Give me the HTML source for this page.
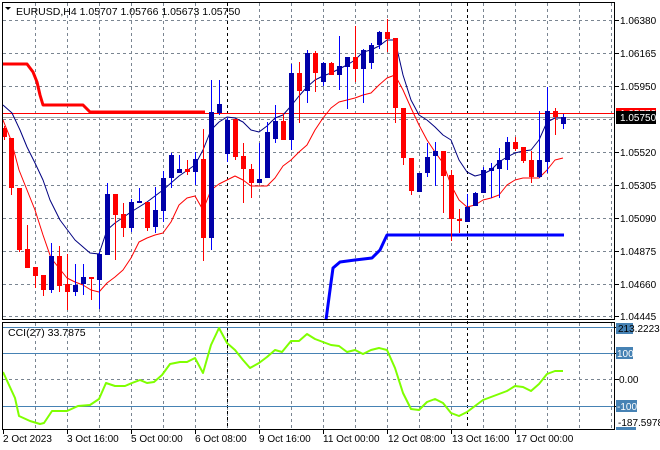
<!DOCTYPE html>
<html><head><meta charset="utf-8"><style>
html,body{margin:0;padding:0;background:#fff;}
svg{display:block;font-family:"Liberation Sans",sans-serif;}
</style></head><body>
<svg id="s" width="660" height="450" viewBox="0 0 660 450" xmlns="http://www.w3.org/2000/svg">
<rect width="660" height="450" fill="#fff"/>
<g id="grid" stroke="#7a8591" stroke-width="1" stroke-dasharray="3,3"></g>
<line x1="227.5" y1="3" x2="227.5" y2="429" stroke="#000" stroke-dasharray="3,3"/>
<line x1="467.5" y1="3" x2="467.5" y2="429" stroke="#000" stroke-dasharray="3,3"/>
<line x1="3" y1="327.5" x2="615" y2="327.5" stroke="#4682b4"/>
<line x1="3" y1="353.5" x2="615" y2="353.5" stroke="#4682b4"/>
<line x1="3" y1="406.5" x2="615" y2="406.5" stroke="#4682b4"/>
<line x1="3" y1="113.5" x2="615" y2="113.5" stroke="#ff0000"/>
<line x1="3" y1="117.5" x2="615" y2="117.5" stroke="#a0a0a0"/>
<g id="ind"></g>
<g id="candles"></g>
<rect x="2.5" y="2.5" width="612" height="317" fill="none" stroke="#000"/>
<rect x="2.5" y="322.5" width="612" height="107" fill="none" stroke="#000"/>
<g id="ticks" stroke="#000"></g>
<path d="M5 7 L11 7 L8 10 Z" fill="#000"/>
<text x="16" y="15" font-size="10.5" fill="#000">EURUSD,H4  1.05707 1.05766 1.05673 1.05750</text>
<text x="8" y="336" font-size="10.5" fill="#000">CCI(27) 33.7875</text>
<g font-size="10" fill="#000">
<text x="620" y="24">1.06380</text>
<text x="620" y="57">1.06165</text>
<text x="620" y="90">1.05950</text>
<text x="620" y="156">1.05520</text>
<text x="620" y="189">1.05305</text>
<text x="620" y="222">1.05090</text>
<text x="620" y="255">1.04875</text>
<text x="620" y="288">1.04660</text>
<text x="620" y="320">1.04445</text>
</g>
<rect x="616" y="108" width="40" height="11" fill="#ff0000"/>
<text x="620" y="117" font-size="10" fill="#fff">1.05773</text>
<rect x="616" y="111" width="40" height="13" fill="#000"/>
<text x="620" y="121" font-size="10" fill="#fff">1.05750</text>
<rect x="616" y="323" width="17" height="11" fill="#4682b4"/>
<text x="618" y="332" font-size="10" fill="#000">213.2223</text>
<rect x="616" y="347" width="17" height="12" fill="#4682b4"/>
<text x="617" y="357" font-size="10" fill="#fff">100</text>
<text x="619" y="383" font-size="10" fill="#000">0.00</text>
<rect x="616" y="400" width="21" height="12" fill="#4682b4"/>
<text x="617" y="410" font-size="10" fill="#fff">-100</text>
<rect x="616" y="427" width="20" height="3" fill="#4682b4"/>
<text x="618" y="426" font-size="10" fill="#000">-187.5978</text>
<g font-size="10" fill="#000">
<text x="3" y="442">2 Oct 2023</text>
<text x="67" y="442">3 Oct 16:00</text>
<text x="131" y="442">5 Oct 00:00</text>
<text x="195" y="442">6 Oct 08:00</text>
<text x="259" y="442">9 Oct 16:00</text>
<text x="323" y="442">11 Oct 00:00</text>
<text x="388" y="442">12 Oct 08:00</text>
<text x="452" y="442">13 Oct 16:00</text>
<text x="516" y="442">17 Oct 00:00</text>
</g>
</svg>
<script>
var NS="http://www.w3.org/2000/svg";
function el(p,t,a){var e=document.createElementNS(NS,t);for(var k in a)e.setAttribute(k,a[k]);document.getElementById(p).appendChild(e);return e;}
for(var x=35;x<615;x+=32){el("grid","line",{x1:x+.5,y1:3,x2:x+.5,y2:319});el("grid","line",{x1:x+.5,y1:323,x2:x+.5,y2:429});}
[20,53,86,119,152,185,218,251,284,316].forEach(function(y){el("grid","line",{x1:3,y1:y+.5,x2:614,y2:y+.5});});
el("grid","line",{x1:3,y1:379.5,x2:614,y2:379.5});
[20,53,86,152,185,218,251,284,316,327,353,379,406].forEach(function(y){el("ticks","line",{x1:615,y1:y+.5,x2:619,y2:y+.5});});
[3,67,131,195,259,323,387,451,515].forEach(function(x){el("ticks","line",{x1:x+.5,y1:430,x2:x+.5,y2:434});});
function pl(pts,c,w){el("ind","polyline",{points:pts.map(function(p){return p.join(",")}).join(" "),fill:"none",stroke:c,"stroke-width":w,"stroke-linejoin":"round"});}
pl([[3,64],[27,64],[33,72],[37,82],[40,95],[43,105],[83,105],[90,112],[205,112]],"#ff0000",3);
pl([[326,320],[330,290],[333,268],[340,262],[355,260],[372,258],[380,250],[387,235],[564,235]],"#0000ff",3);
pl([[3,105],[12,113],[20,130],[27,147],[35,163],[43,180],[50,200],[60,220],[75,240],[90,253],[99,254],[107,230],[115,223],[131,212],[147,202],[163,190],[179,176],[195,165],[203,150],[211,130],[219,122],[227,117],[235,118],[243,122],[251,130],[259,132],[267,126],[275,118],[283,115],[291,106],[299,96],[307,87],[315,80],[323,76],[331,73],[339,69],[347,65],[355,60],[363,52],[371,50],[379,46],[387,40],[395,40],[403,75],[411,100],[419,115],[427,120],[435,127],[443,135],[451,140],[459,160],[467,172],[475,176],[483,174],[491,170],[499,162],[507,157],[515,153],[523,151],[531,150],[539,140],[547,122],[555,118],[563,118]],"#000080",1);
pl([[3,120],[11,140],[19,170],[27,190],[35,210],[43,235],[51,258],[59,268],[67,278],[75,282],[83,285],[91,290],[99,292],[107,283],[115,277],[123,270],[131,258],[139,242],[147,238],[155,235],[163,233],[171,222],[179,205],[187,198],[195,196],[203,210],[211,190],[219,184],[227,180],[235,176],[243,180],[251,186],[259,186],[267,186],[275,178],[283,166],[291,160],[299,152],[307,145],[315,130],[323,118],[331,108],[339,102],[347,100],[355,98],[363,95],[371,93],[379,85],[387,78],[395,75],[403,90],[411,108],[419,125],[427,140],[435,152],[443,163],[451,185],[459,200],[467,207],[475,205],[483,200],[491,198],[499,195],[507,185],[515,180],[523,178],[531,178],[539,178],[547,170],[555,160],[563,158]],"#ff0000",1);
pl([[3,372],[15,398],[19,416],[30,421],[40,424],[44,423],[52,411],[67,411],[78,406],[90,405],[99,399],[106,383],[115,386],[125,386],[132,383],[140,380],[147,383],[154,382],[162,375],[170,364],[180,362],[187,362],[195,358],[203,373],[211,345],[219,328],[227,343],[235,350],[243,360],[250,368],[259,363],[267,357],[275,350],[282,352],[291,341],[299,341],[307,334],[315,339],[323,342],[331,345],[339,346],[347,352],[355,350],[363,354],[371,350],[379,348],[387,350],[395,368],[403,393],[411,409],[419,410],[427,402],[435,399],[443,403],[451,413],[459,416],[467,412],[475,406],[483,400],[491,397],[499,394],[507,391],[515,386],[523,387],[531,391],[539,384],[547,374],[555,371],[563,371]],"#7fff00",2);
var C=[[4,"r",128,137,126,140],[11,"r",138,188,138,195],[19,"r",188,250,188,252],[27,"r",249,268,225,268],[35,"r",267,276,267,288],[43,"r",275,290,275,296],[51,"b",256,290,243,293],[59,"r",256,286,246,292],[67,"r",284,292,254,310],[75,"b",285,292,264,296],[83,"b",277,284,264,295],[91,"r",277,279,277,300],[99,"b",254,280,252,309],[107,"b",194,255,183,255],[115,"r",194,215,194,260],[123,"r",214,228,203,237],[131,"b",202,228,199,232],[139,"b",201,203,188,203],[147,"r",202,228,202,231],[155,"b",210,227,187,233],[163,"b",178,211,171,222],[171,"b",155,178,153,188],[179,"b",169,173,155,173],[187,"r",169,172,160,175],[195,"b",159,172,152,185],[203,"r",159,238,129,261],[211,"b",112,238,80,250],[219,"b",104,113,80,115],[227,"b",120,154,118,162],[235,"r",119,157,119,160],[243,"r",156,169,143,203],[251,"r",169,183,164,198],[259,"b",179,183,143,183],[267,"b",132,178,122,178],[275,"b",121,139,105,143],[283,"r",121,140,114,140],[291,"b",73,140,64,150],[299,"r",73,91,62,123],[307,"b",53,91,50,103],[315,"r",53,73,51,92],[323,"b",63,82,62,86],[331,"r",63,75,62,75],[339,"b",66,75,36,90],[347,"b",57,67,57,109],[355,"r",57,69,26,82],[363,"b",50,69,49,103],[371,"b",45,63,43,69],[379,"b",32,45,31,49],[387,"r",32,39,19,52],[395,"r",38,108,38,123],[403,"r",108,158,108,165],[411,"r",158,191,158,195],[419,"b",173,192,173,192],[427,"b",157,173,143,177],[435,"b",151,156,142,186],[443,"r",151,176,151,213],[451,"r",175,219,170,241],[459,"r",219,221,209,233],[467,"b",207,222,194,222],[475,"b",193,206,192,206],[483,"b",170,193,167,193],[491,"b",168,171,163,198],[499,"b",160,169,148,198],[507,"b",142,160,137,170],[515,"r",142,149,137,151],[523,"r",147,161,147,163],[531,"r",160,177,151,183],[539,"b",160,177,111,178],[547,"b",111,162,87,173],[555,"r",111,117,108,135],[563,"b",117,124,114,129]];
C.forEach(function(c){var col=c[1]=="r"?"#ff0000":"#0000ff";var body=c[1]=="r"?"#ff0000":"#0000a8";
el("candles","line",{x1:c[0]+.5,y1:c[4],x2:c[0]+.5,y2:c[5],stroke:col});
el("candles","rect",{x:c[0]-2,y:c[2],width:5,height:Math.max(1,c[3]-c[2]),fill:body});});
</script>
</body></html>
